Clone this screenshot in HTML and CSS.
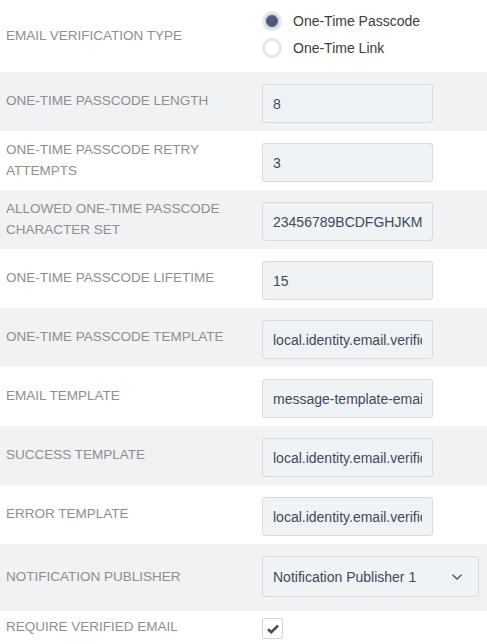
FILE: index.html
```html
<!DOCTYPE html>
<html lang="en">
<head>
<meta charset="utf-8">
<title>Email Verification Settings</title>
<link rel="stylesheet" href="styles.css">
</head>
<body>
<form class="settings">
  <div class="row row-radio">
    <div class="label">EMAIL VERIFICATION TYPE</div>
    <div class="control radios">
      <label class="radio"><span class="dot checked"></span><span>One-Time Passcode</span></label>
      <label class="radio"><span class="dot"></span><span>One-Time Link</span></label>
    </div>
  </div>
  <div class="row alt">
    <div class="label">ONE-TIME PASSCODE LENGTH</div>
    <div class="control"><input class="field" type="text" value="8"></div>
  </div>
  <div class="row">
    <div class="label">ONE-TIME PASSCODE RETRY ATTEMPTS</div>
    <div class="control"><input class="field" type="text" value="3"></div>
  </div>
  <div class="row alt">
    <div class="label">ALLOWED ONE-TIME PASSCODE CHARACTER SET</div>
    <div class="control"><input class="field" type="text" value="23456789BCDFGHJKMNPQRSTVWXZ"></div>
  </div>
  <div class="row">
    <div class="label">ONE-TIME PASSCODE LIFETIME</div>
    <div class="control"><input class="field" type="text" value="15"></div>
  </div>
  <div class="row alt">
    <div class="label">ONE-TIME PASSCODE TEMPLATE</div>
    <div class="control"><input class="field" type="text" value="local.identity.email.verification.otp"></div>
  </div>
  <div class="row">
    <div class="label">EMAIL TEMPLATE</div>
    <div class="control"><input class="field" type="text" value="message-template-email-ownership-verification"></div>
  </div>
  <div class="row alt">
    <div class="label">SUCCESS TEMPLATE</div>
    <div class="control"><input class="field" type="text" value="local.identity.email.verification.success"></div>
  </div>
  <div class="row">
    <div class="label">ERROR TEMPLATE</div>
    <div class="control"><input class="field" type="text" value="local.identity.email.verification.error"></div>
  </div>
  <div class="row alt row-select">
    <div class="label">NOTIFICATION PUBLISHER</div>
    <div class="control">
      <div class="select">
        <span>Notification Publisher 1</span>
        <svg class="chev" width="12" height="8" viewBox="0 0 12 8"><path d="M1.5 1.8 L6 6 L10.5 1.8" fill="none" stroke="#44546a" stroke-width="1.4"/></svg>
      </div>
    </div>
  </div>
  <div class="row row-check">
    <div class="label">REQUIRE VERIFIED EMAIL</div>
    <div class="control">
      <span class="checkbox"><svg width="14" height="12" viewBox="0 0 14 12"><path d="M2 6.2 L5.3 9.2 L12 2.6" fill="none" stroke="#3e4d63" stroke-width="2.6" stroke-linejoin="miter"/></svg></span>
    </div>
  </div>
</form>
</body>
</html>
```

FILE: styles.css
```css
html, body {
  margin: 0;
  padding: 0;
  background: #ffffff;
}

body {
  font-family: "Liberation Sans", Arial, sans-serif;
  width: 487px;
}

.settings {
  display: flex;
  flex-direction: column;
}

.row {
  display: flex;
  align-items: center;
  padding-left: 1px;
}

.row.alt {
  background: #f1f2f4;
}

.label {
  width: 237px;
  flex: none;
  padding-left: 5px;
  padding-right: 19px;
  font-size: 13.5px;
  line-height: 20.5px;
  color: #8a8f95;
}

.control {
  flex: 1;
  padding: 12px 0 8px 0;
  display: flex;
}

.field {
  box-sizing: border-box;
  width: 171px;
  height: 39px;
  margin: 0;
  padding: 0 10px 0 10px;
  border: 1px solid #d6dbe0;
  border-radius: 3px;
  background: #eff3f6;
  font-family: "Liberation Sans", Arial, sans-serif;
  font-size: 14px;
  color: #3b4a5e;
  outline: none;
}

.row-radio .control {
  flex-direction: column;
  padding: 7px 0 11px 0;
}

.radio {
  display: flex;
  align-items: center;
  height: 27px;
  gap: 11px;
  font-size: 14px;
  color: #3a3d42;
}

.dot {
  box-sizing: border-box;
  width: 20px;
  height: 20px;
  border-radius: 50%;
  border: 3px solid #e5e7ea;
  background: #ffffff;
  flex: none;
}

.dot.checked {
  background: #4b5c76;
  box-shadow: inset 0 0 0 1px #e5e7ea;
}

.row-select .control {
  padding: 12px 0 14px 0;
}

.select {
  box-sizing: border-box;
  width: 217px;
  height: 41px;
  border: 1px solid #d6dbe0;
  border-radius: 3px;
  background: #eff3f6;
  display: flex;
  align-items: center;
  justify-content: space-between;
  padding: 0 15px 0 10px;
  font-size: 14px;
  color: #3b4a5e;
}

.row-check .control {
  padding: 7px 0 5px 0;
}

.checkbox {
  box-sizing: border-box;
  width: 21px;
  height: 21px;
  border: 1px solid #cfd4da;
  border-radius: 2px;
  background: #ffffff;
  display: flex;
  align-items: center;
  justify-content: center;
}
```
